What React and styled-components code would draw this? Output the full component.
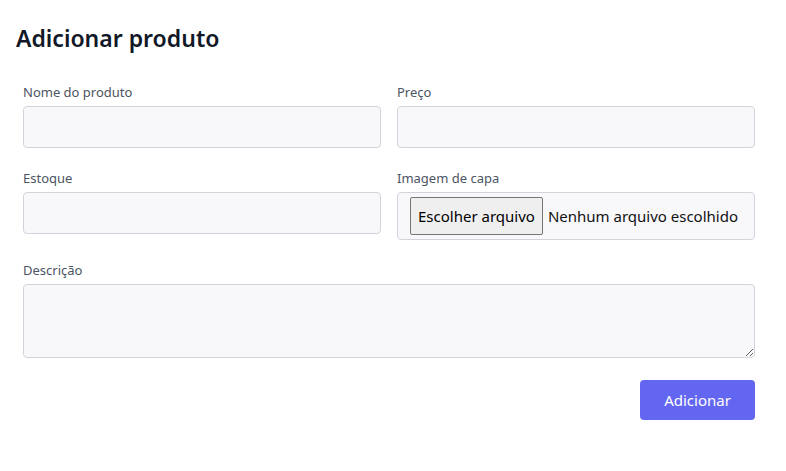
import React from "react";
import styled, { createGlobalStyle } from "styled-components";

const GlobalStyle = createGlobalStyle`
  body {
    margin: 0;
    background: #fff;
    font-family: "Noto Sans", "Open Sans", sans-serif;
    color: #111827;
  }
`;

const Page = styled.div`
  padding: 22px 31px 0 16px;
`;

const Title = styled.h1`
  margin: 0 0 29px;
  font-size: 23px;
  line-height: 32px;
  font-weight: 600;
  color: #111827;
`;

const Form = styled.form`
  display: grid;
  grid-template-columns: 1fr 1fr;
  column-gap: 16px;
  row-gap: 21px;
  align-items: start;
  margin-left: 7px;
`;

const Field = styled.div`
  display: flex;
  flex-direction: column;
  grid-column: ${(props) => (props.wide ? "1 / -1" : "auto")};
`;

const Label = styled.label`
  font-size: 13px;
  line-height: 18px;
  color: #4b5563;
  margin-bottom: 5px;
`;

const Input = styled.input`
  box-sizing: border-box;
  height: 42px;
  width: 100%;
  background: #f8f8fa;
  border: 1px solid #d1d5db;
  border-radius: 4px;
  padding: 0 12px;
  font: inherit;
  &:focus {
    outline: none;
  }
`;

const TextArea = styled.textarea`
  box-sizing: border-box;
  height: 74px;
  width: 100%;
  background: #f8f8fa;
  border: 1px solid #d1d5db;
  border-radius: 4px;
  padding: 8px 12px;
  font: inherit;
  resize: vertical;
`;

const FileBox = styled.label`
  box-sizing: border-box;
  height: 48px;
  display: flex;
  align-items: center;
  gap: 5px;
  padding: 0 12px;
  background: #f8f8fa;
  border: 1px solid #d1d5db;
  border-radius: 4px;
  font-size: 15px;
  color: #111;
`;

const FileButton = styled.span`
  box-sizing: border-box;
  height: 38px;
  display: flex;
  align-items: center;
  padding: 0 7px;
  background: #efefef;
  border: 1px solid #767676;
  border-radius: 2px;
  color: #000;
  white-space: nowrap;
`;

const HiddenFile = styled.input`
  display: none;
`;

const Actions = styled.div`
  grid-column: 1 / -1;
  display: flex;
  justify-content: flex-end;
  margin-top: 1px;
`;

const Submit = styled.button`
  height: 40px;
  width: 115px;
  border: none;
  border-radius: 4px;
  background: #6366f1;
  color: #fff;
  font: inherit;
  font-size: 15px;
  cursor: pointer;
`;

const App = () => {
  return (
    <>
      <GlobalStyle />
      <Page>
        <Title>Adicionar produto</Title>
        <Form onSubmit={(e) => e.preventDefault()}>
          <Field>
            <Label>Nome do produto</Label>
            <Input type="text" />
          </Field>
          <Field>
            <Label>Preço</Label>
            <Input type="text" />
          </Field>
          <Field>
            <Label>Estoque</Label>
            <Input type="text" />
          </Field>
          <Field>
            <Label>Imagem de capa</Label>
            <FileBox>
              <FileButton>Escolher arquivo</FileButton>
              <span>Nenhum arquivo escolhido</span>
              <HiddenFile type="file" />
            </FileBox>
          </Field>
          <Field wide>
            <Label>Descrição</Label>
            <TextArea />
          </Field>
          <Actions>
            <Submit type="submit">Adicionar</Submit>
          </Actions>
        </Form>
      </Page>
    </>
  );
};

export default App;
